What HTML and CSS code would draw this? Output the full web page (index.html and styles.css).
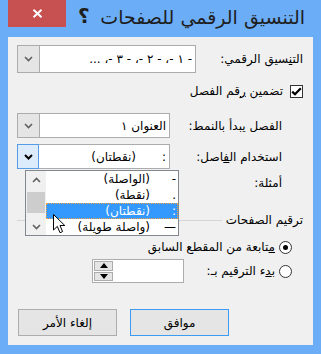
FILE: index.html
```html
<!DOCTYPE html>
<html lang="ar" dir="rtl">
<head>
  <meta charset="UTF-8">
  <meta name="viewport" content="width=device-width, initial-scale=1.0">
  <title>التنسيق الرقمي للصفحات</title>
  <link rel="stylesheet" href="styles.css">
</head>
<body>
  <div class="window">
    <div class="titlebar">
      <span class="title">التنسيق الرقمي للصفحات</span>
      <span class="help">؟</span>
      <button class="close" type="button">
        <svg width="11" height="9" viewBox="0 0 11 9"><path d="M1.5 0.8L9.5 8.2M9.5 0.8L1.5 8.2" stroke="#fff" stroke-width="2" fill="none"/></svg>
      </button>
    </div>

    <div class="content">
      <div class="row row-first">
        <label>الت<u>ن</u>سيق الرقمي:</label>
        <div class="combo combo-wide">
          <span class="val">- ١ -، - ٢ -، - ٣ -، ...</span>
          <span class="drop">
            <svg width="9" height="6" viewBox="0 0 9 6"><path d="M1 1l3.5 3.5L8 1" fill="none" stroke="#606060" stroke-width="1.6"/></svg>
          </span>
        </div>
      </div>

      <div class="row check-row">
        <span class="check">
          <svg width="11" height="9" viewBox="0 0 11 9"><path d="M1.2 4.6L4 7.3L9.8 1.2" fill="none" stroke="#000" stroke-width="2.2"/></svg>
        </span>
        <span class="check-label">تضمين <u>ر</u>قم الفصل</span>
      </div>

      <div class="row indent row-second">
        <label>الفصل <u>ي</u>بدأ بالنمط:</label>
        <div class="combo">
          <span class="val">العنوان ١</span>
          <span class="drop">
            <svg width="9" height="6" viewBox="0 0 9 6"><path d="M1 1l3.5 3.5L8 1" fill="none" stroke="#606060" stroke-width="1.6"/></svg>
          </span>
        </div>
      </div>

      <div class="row indent row-third">
        <label>استخدام ال<u>ف</u>اصل:</label>
        <div class="combo">
          <span class="val"><span class="sep">:</span><span>(نقطتان)</span></span>
          <span class="drop drop-focus">
            <svg width="9" height="6" viewBox="0 0 9 6"><path d="M1 1l3.5 3.5L8 1" fill="none" stroke="#000" stroke-width="2"/></svg>
          </span>
        </div>
      </div>

      <div class="row indent row-examples">
        <label>أمثلة:</label>
      </div>

      <div class="group-head">
        <span>ترقيم الصفحات</span>
        <span class="line"></span>
      </div>

      <div class="radio-row radio-first">
        <span class="radio checked"></span>
        <span><u>م</u>تابعة من المقطع السابق</span>
      </div>

      <div class="radio-row radio-second">
        <span class="radio"></span>
        <span class="start-label">ب<u>د</u>ء الترقيم بـ:</span>
        <div class="spin">
          <span class="spin-val"></span>
          <span class="spin-btns">
            <span class="spin-btn">
              <svg width="8" height="5" viewBox="0 0 8 5"><path d="M0 5L4 0L8 5Z" fill="#000"/></svg>
            </span>
            <span class="spin-btn">
              <svg width="8" height="5" viewBox="0 0 8 5"><path d="M0 0L8 0L4 5Z" fill="#000"/></svg>
            </span>
          </span>
        </div>
      </div>

      <div class="buttons">
        <button class="btn btn-default" type="button">موافق</button>
        <button class="btn" type="button">إلغاء الأمر</button>
      </div>

      <!-- open dropdown of the separator combo -->
      <div class="dropdown">
        <div class="items">
          <div class="item"><span class="sep">-</span><span>(الواصلة)</span></div>
          <div class="item"><span class="sep">.</span><span>(نقطة)</span></div>
          <div class="item selected"><span class="sep">:</span><span>(نقطتان)</span></div>
          <div class="item"><span class="sep">—</span><span>(واصلة طويلة)</span></div>
        </div>
        <div class="scrollbar">
          <span class="arrow">
            <svg width="9" height="6" viewBox="0 0 9 6"><path d="M1 5l3.5-3.5L8 5" fill="none" stroke="#606060" stroke-width="1.6"/></svg>
          </span>
          <span class="thumb"></span>
          <span class="arrow arrow-down">
            <svg width="9" height="6" viewBox="0 0 9 6"><path d="M1 1l3.5 3.5L8 1" fill="none" stroke="#606060" stroke-width="1.6"/></svg>
          </span>
        </div>
      </div>

      <svg class="cursor" width="13" height="20" viewBox="0 0 13 20"><path d="M0.5 0.5L0.5 16L4.3 12.4L7 18.7L9.6 17.6L7 11.5L11.8 11.5Z" fill="#fff" stroke="#000" stroke-width="1" stroke-linejoin="round"/></svg>
    </div>
  </div>
</body>
</html>
```

FILE: styles.css
```css
body {
  margin: 0;
  font-family: "DejaVu Sans", sans-serif;
  font-size: 12px;
  color: #000;
}
u {
  text-decoration-thickness: 1px;
}
.window {
  width: 321px;
  height: 354px;
  background-color: #6badf6;
  display: flex;
  flex-direction: column;
}
.titlebar {
  height: 37px;
  display: flex;
  align-items: flex-start;
}
.title {
  font-size: 19px;
  color: #1e1e1e;
  margin-right: 16px;
  margin-top: 6px;
}
.help {
  margin-right: auto;
  margin-left: 12px;
  margin-top: 4px;
  font-size: 20px;
  font-weight: bold;
  color: #1e1e1e;
}
.close {
  width: 58px;
  height: 27px;
  margin-left: 8px;
  padding: 0;
  border: none;
  background-color: #c75050;
  display: flex;
  align-items: center;
  justify-content: center;
}
.content {
  position: relative;
  margin: 0 8px 9px;
  height: 308px;
  box-sizing: border-box;
  padding: 8px 10px 9px 9px;
  background-color: #f0f0f0;
  display: flex;
  flex-direction: column;
}
.row {
  display: flex;
  align-items: center;
  justify-content: space-between;
}
.indent {
  padding-right: 21px;
}
.row-first {
  height: 28px;
}
.check-row {
  height: 20px;
  margin-top: 8px;
  justify-content: flex-start;
}
.row-second {
  height: 25px;
  margin-top: 12px;
}
.row-third {
  height: 25px;
  margin-top: 6px;
}
.row-examples {
  height: 20px;
  margin-top: 4px;
}
.combo {
  width: 153px;
  height: 25px;
  box-sizing: border-box;
  border: 1px solid #acacac;
  background-color: #fff;
  display: flex;
}
.combo-wide {
  width: 179px;
  height: 28px;
}
.combo .val {
  flex: 1;
  display: flex;
  align-items: center;
  padding-right: 3px;
  white-space: nowrap;
}
.drop {
  width: 21px;
  background-color: #e5e5e5;
  border-right: 1px solid #acacac;
  display: flex;
  align-items: center;
  justify-content: center;
}
.drop-focus {
  margin: -1px 0 -1px -1px;
  width: 20px;
  background-color: #dcecfc;
  border: 1px solid #569de5;
}
.sep {
  width: 30px;
  flex: none;
}
.check {
  width: 13px;
  height: 13px;
  box-sizing: border-box;
  border: 1px solid #333;
  background-color: #fff;
  display: flex;
  align-items: center;
  justify-content: center;
}
.check-label {
  margin-right: 7px;
}
.group-head {
  height: 20px;
  margin-top: 17px;
  display: flex;
  align-items: center;
}
.group-head .line {
  flex: 1;
  height: 1px;
  margin: 0 4px 0 0;
  background-color: #d5d5d5;
}
.radio-row {
  display: flex;
  align-items: center;
  padding-right: 11px;
}
.radio-first {
  height: 20px;
  margin-top: 7px;
}
.radio-second {
  height: 24px;
  margin-top: 2px;
}
.radio {
  width: 13px;
  height: 13px;
  box-sizing: border-box;
  border: 1px solid #333;
  border-radius: 50%;
  background-color: #fff;
  margin-left: 4px;
  display: flex;
  align-items: center;
  justify-content: center;
}
.radio.checked::after {
  content: "";
  width: 5px;
  height: 5px;
  border-radius: 50%;
  background-color: #000;
}
.start-label {
  width: 91px;
  flex: none;
}
.spin {
  width: 92px;
  height: 24px;
  box-sizing: border-box;
  border: 1px solid #acacac;
  background-color: #fff;
  display: flex;
}
.spin-val {
  flex: 1;
}
.spin-btns {
  width: 19px;
  padding: 1px;
  display: flex;
  flex-direction: column;
  gap: 1px;
}
.spin-btn {
  flex: 1;
  background-color: #e5e5e5;
  border: 1px solid #acacac;
  display: flex;
  align-items: center;
  justify-content: center;
}
.buttons {
  height: 27px;
  margin-top: 26px;
  display: flex;
  justify-content: flex-end;
  gap: 13px;
  padding-left: 1px;
}
.btn {
  width: 99px;
  height: 27px;
  padding: 0;
  font-family: "DejaVu Sans", sans-serif;
  font-size: 12px;
  color: #000;
  background-color: #e5e5e5;
  border: 1px solid #adadad;
}
.btn-default {
  border-color: #3c9cf2;
}
.dropdown {
  position: absolute;
  left: 17px;
  top: 133px;
  width: 154px;
  height: 66px;
  box-sizing: border-box;
  border: 1px solid #828790;
  background-color: #fff;
  display: flex;
}
.items {
  flex: 1;
}
.item {
  height: 16px;
  display: flex;
  align-items: center;
  padding-right: 2px;
  white-space: nowrap;
}
.item .sep {
  width: 26px;
}
.selected {
  background-color: #3399ff;
  color: #fff;
  outline: 1px dotted #f5a043;
  outline-offset: -1px;
}
.scrollbar {
  width: 20px;
  background-color: #f0f0f0;
  display: flex;
  flex-direction: column;
  align-items: center;
}
.arrow {
  height: 17px;
  display: flex;
  align-items: center;
  justify-content: center;
}
.thumb {
  width: 18px;
  height: 21px;
  margin-top: 4px;
  background-color: #cdcdcd;
}
.arrow-down {
  margin-top: auto;
}
.cursor {
  position: absolute;
  left: 45px;
  top: 177px;
}
```
